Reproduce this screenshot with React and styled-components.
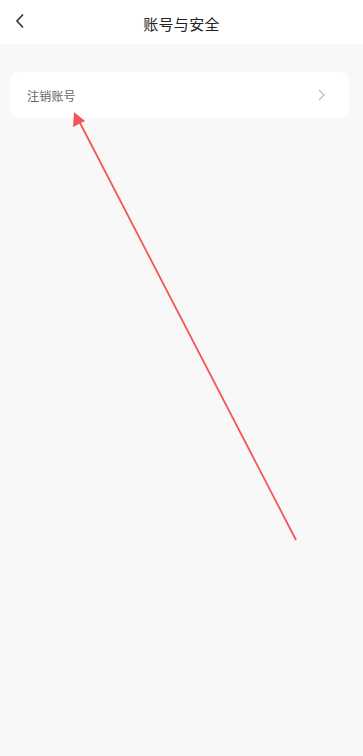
import React from "react";
import styled, { createGlobalStyle } from "styled-components";

const GlobalStyle = createGlobalStyle`
  html, body {
    margin: 0;
    padding: 0;
    background: #f8f8f8;
    font-family: "Noto Sans CJK SC", "Noto Sans", sans-serif;
  }
`;

const Page = styled.div`
  position: relative;
  width: 363px;
  height: 756px;
  background: #f8f8f8;
  overflow: hidden;
`;

const Header = styled.header`
  height: 44px;
  background: #fff;
  display: flex;
  align-items: center;
  justify-content: center;
  position: relative;
`;

const BackButton = styled.button`
  position: absolute;
  left: 10px;
  top: 10px;
  width: 20px;
  height: 22px;
  padding: 0;
  border: none;
  background: none;
  display: flex;
  align-items: center;
  justify-content: center;
`;

const Title = styled.h1`
  margin: 2px 0 0;
  font-size: 15px;
  font-weight: 400;
  color: #222;
  letter-spacing: 0.3px;
`;

const Content = styled.main`
  padding: 28px 14px 0 10px;
`;

const Card = styled.div`
  background: #fff;
  border-radius: 8px;
`;

const Row = styled.div`
  height: 46px;
  display: flex;
  align-items: center;
  justify-content: space-between;
  padding: 0 24px 0 17px;
`;

const RowLabel = styled.span`
  font-size: 12px;
  color: #666;
  letter-spacing: 0.2px;
`;

const Arrow = styled.svg`
  position: absolute;
  left: 0;
  top: 0;
  pointer-events: none;
`;

export default function App() {
  return (
    <Page>
      <GlobalStyle />
      <Header>
        <BackButton aria-label="返回">
          <svg width="10" height="16" viewBox="0 0 10 16">
            <path d="M8 1.5 L2 8 L8 14.5" fill="none" stroke="#333" strokeWidth="1.6" />
          </svg>
        </BackButton>
        <Title>账号与安全</Title>
      </Header>
      <Content>
        <Card>
          <Row>
            <RowLabel>注销账号</RowLabel>
            <svg width="7" height="12" viewBox="0 0 7 12">
              <path d="M1 1 L6 6 L1 11" fill="none" stroke="#bbb" strokeWidth="1.3" />
            </svg>
          </Row>
        </Card>
      </Content>
      <Arrow width="363" height="756" viewBox="0 0 363 756">
        <line x1="296" y1="540" x2="79" y2="121" stroke="#f25757" strokeWidth="1.8" />
        <polygon points="74,112 73,127 85,121" fill="#f25757" />
      </Arrow>
    </Page>
  );
}
